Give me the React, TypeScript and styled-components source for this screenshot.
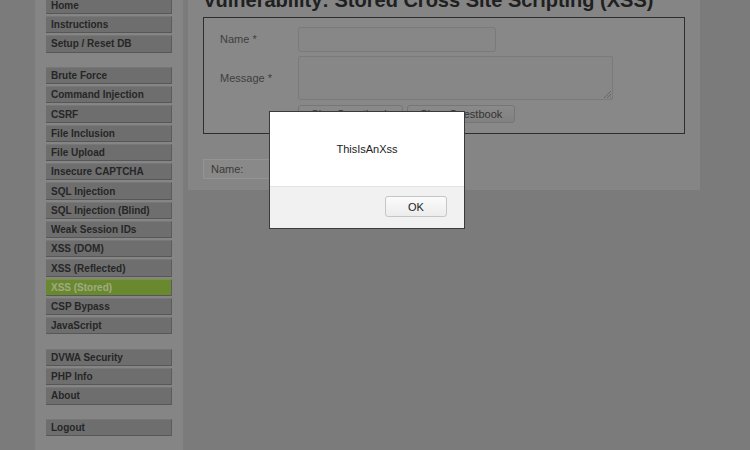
import React from "react";
import styled, { createGlobalStyle } from "styled-components";

const GlobalStyle = createGlobalStyle`
  html, body {
    margin: 0;
    padding: 0;
    height: 100%;
    overflow: hidden;
    background: #7b7b7b;
    font-family: "Liberation Sans", Arial, sans-serif;
  }
`;

const Page = styled.div`
  display: flex;
  flex-direction: row;
  align-items: flex-start;
  gap: 5px;
  margin: -3.25px 0 0 35px;
  width: 665px;
`;

const MenuPanel = styled.div`
  width: 126px;
  height: 470px;
  padding: 0 11px;
  background: #858585;
`;

const MenuGroup = styled.ul`
  list-style: none;
  margin: 0 0 14.4px 0;
  padding: 0;
`;

const MenuItem = styled.li<{ $selected?: boolean }>`
  height: 15.25px;
  margin-bottom: 2px;
  padding-left: 5px;
  display: flex;
  align-items: center;
  font-size: 10px;
  font-weight: bold;
  color: ${(p) => (p.$selected ? "#9fab86" : "#262626")};
  background: ${(p) => (p.$selected ? "#6a882e" : "#6e6e6e")};
  border-top: 1px solid ${(p) => (p.$selected ? "#769534" : "#777777")};
  border-bottom: 1px solid #575757;
  border-right: 1px solid #5c5c5c;
  box-sizing: content-box;
  white-space: nowrap;
`;

const Content = styled.div`
  width: 482px;
  padding: 0 15px 11px 15px;
  background: #858585;
`;

const Heading = styled.h1`
  margin: -8.4px 0 0 0;
  font-size: 20px;
  line-height: 24px;
  font-weight: bold;
  color: #202020;
  white-space: nowrap;
`;

const CodeArea = styled.div`
  margin-top: 4.6px;
  border: 1px solid #2e2e2e;
  background: #888888;
  padding: 9px 0 10px 16px;
  display: grid;
  grid-template-columns: 78px auto;
  row-gap: 4px;
  align-items: center;
`;

const Label = styled.label`
  font-size: 11px;
  color: #3e3e3e;
`;

const TextInput = styled.div`
  width: 196px;
  height: 23px;
  border: 1px solid #7a7a7a;
  border-radius: 3px;
  background: #878787;
`;

const TextArea = styled.div`
  position: relative;
  width: 313px;
  height: 42px;
  border: 1px solid #7a7a7a;
  border-radius: 2px;
  background: #878787;
`;

const Grip = styled.svg`
  position: absolute;
  right: 1px;
  bottom: 1px;
`;

const ButtonRow = styled.div`
  grid-column: 2;
  display: flex;
  gap: 4px;
  margin-top: 1px;
`;

const FormButton = styled.div<{ $width: number }>`
  width: ${(p) => p.$width}px;
  height: 16px;
  border: 1px solid #767676;
  border-radius: 3px;
  background: linear-gradient(#8a8a8a, #818181);
  font-size: 11px;
  color: #333333;
  display: flex;
  align-items: center;
  justify-content: center;
`;

const Entry = styled.div`
  margin-top: 25px;
  width: 190px;
  height: 18px;
  padding-left: 7px;
  border: 1px solid #949494;
  background: #898989;
  font-size: 11px;
  color: #3a3a3a;
  display: flex;
  align-items: center;
`;

const Dialog = styled.div`
  position: absolute;
  left: 269px;
  top: 111px;
  width: 194px;
  border: 1px solid #3a3a3a;
  background: #ffffff;
  display: flex;
  flex-direction: column;
`;

const DialogBody = styled.div`
  height: 74px;
  display: flex;
  align-items: center;
  justify-content: center;
  font-size: 11px;
  color: #222222;
`;

const DialogFooter = styled.div`
  height: 42px;
  background: #f1f1f1;
  border-top: 1px solid #e4e4e4;
  display: flex;
  justify-content: flex-end;
  align-items: flex-start;
  padding: 9px 17px 0 0;
  box-sizing: border-box;
`;

const OkButton = styled.div`
  width: 60px;
  height: 19px;
  border: 1px solid #c6c6c6;
  border-radius: 3px;
  background: linear-gradient(#fbfbfb, #ececec);
  font-size: 11px;
  color: #222222;
  display: flex;
  align-items: center;
  justify-content: center;
`;

const groups: { label: string; selected?: boolean }[][] = [
  [{ label: "Home" }, { label: "Instructions" }, { label: "Setup / Reset DB" }],
  [
    { label: "Brute Force" },
    { label: "Command Injection" },
    { label: "CSRF" },
    { label: "File Inclusion" },
    { label: "File Upload" },
    { label: "Insecure CAPTCHA" },
    { label: "SQL Injection" },
    { label: "SQL Injection (Blind)" },
    { label: "Weak Session IDs" },
    { label: "XSS (DOM)" },
    { label: "XSS (Reflected)" },
    { label: "XSS (Stored)", selected: true },
    { label: "CSP Bypass" },
    { label: "JavaScript" },
  ],
  [{ label: "DVWA Security" }, { label: "PHP Info" }, { label: "About" }],
  [{ label: "Logout" }],
];

function App() {
  return (
    <>
      <GlobalStyle />
      <Page>
        <MenuPanel>
          {groups.map((items, i) => (
            <MenuGroup key={i}>
              {items.map((item) => (
                <MenuItem key={item.label} $selected={item.selected}>
                  {item.label}
                </MenuItem>
              ))}
            </MenuGroup>
          ))}
        </MenuPanel>
        <Content>
          <Heading>Vulnerability: Stored Cross Site Scripting (XSS)</Heading>
          <CodeArea>
            <Label>Name *</Label>
            <TextInput />
            <Label>Message *</Label>
            <TextArea>
              <Grip width="8" height="8" viewBox="0 0 8 8">
                <path d="M8 1 L1 8 M8 4 L4 8 M8 7 L7 8" stroke="#666" strokeWidth="1" />
              </Grip>
            </TextArea>
            <ButtonRow>
              <FormButton $width={103}>Sign Guestbook</FormButton>
              <FormButton $width={106}>Clear Guestbook</FormButton>
            </ButtonRow>
          </CodeArea>
          <Entry>Name:</Entry>
        </Content>
      </Page>
      <Dialog>
        <DialogBody>ThisIsAnXss</DialogBody>
        <DialogFooter>
          <OkButton>OK</OkButton>
        </DialogFooter>
      </Dialog>
    </>
  );
}

export default App;
